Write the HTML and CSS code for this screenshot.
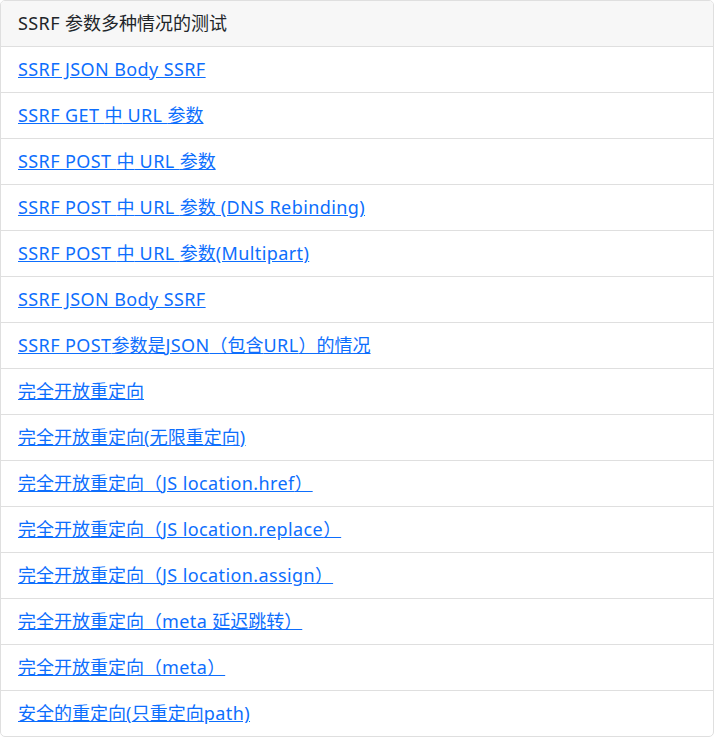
FILE: index.html
```html
<!DOCTYPE html>
<html lang="zh-CN">
<head>
<meta charset="utf-8">
<title>SSRF</title>
<link rel="stylesheet" href="styles.css">
</head>
<body>
<div class="card">
  <div class="card-header"><span class="en">SSRF </span>参数多种情况的测试</div>
  <ul class="list-group">
    <li class="list-item"><a href="#"><span class="en">SSRF JSON Body SSRF</span></a></li>
    <li class="list-item"><a href="#"><span class="en">SSRF GET </span>中<span class="en"> URL </span>参数</a></li>
    <li class="list-item"><a href="#"><span class="en">SSRF POST </span>中<span class="en"> URL </span>参数</a></li>
    <li class="list-item"><a href="#"><span class="en">SSRF POST </span>中<span class="en"> URL </span>参数<span class="en"> (DNS Rebinding)</span></a></li>
    <li class="list-item"><a href="#"><span class="en">SSRF POST </span>中<span class="en"> URL </span>参数<span class="en">(Multipart)</span></a></li>
    <li class="list-item"><a href="#"><span class="en">SSRF JSON Body SSRF</span></a></li>
    <li class="list-item"><a href="#"><span class="en">SSRF POST</span>参数是<span class="en">JSON</span>（包含<span class="en">URL</span>）的情况</a></li>
    <li class="list-item"><a href="#">完全开放重定向</a></li>
    <li class="list-item"><a href="#">完全开放重定向<span class="en">(</span>无限重定向<span class="en">)</span></a></li>
    <li class="list-item"><a href="#">完全开放重定向（<span class="en">JS location.href</span>）</a> </li>
    <li class="list-item"><a href="#">完全开放重定向（<span class="en">JS location.replace</span>）</a> </li>
    <li class="list-item"><a href="#">完全开放重定向（<span class="en">JS location.assign</span>）</a> </li>
    <li class="list-item"><a href="#">完全开放重定向（<span class="en">meta </span>延迟跳转）</a> </li>
    <li class="list-item"><a href="#">完全开放重定向（<span class="en">meta</span>）</a> </li>
    <li class="list-item"><a href="#">安全的重定向<span class="en">(</span>只重定向<span class="en">path)</span></a></li>
  </ul>
</div>
</body>
</html>
```

FILE: styles.css
```css
html, body {
  margin: 0;
  padding: 0;
  background: #fff;
}
body {
  font-family: "Noto Sans", "Noto Sans CJK SC", sans-serif;
  font-size: 18px;
  line-height: 27px;
  color: #212529;
}
.en {
  letter-spacing: 0.4px;
}
.card {
  width: 712px;
  border: 1px solid #dfdfdf;
  border-radius: 5px;
  overflow: hidden;
}
.card-header {
  background: #f7f7f7;
  padding: 9px 17px;
  border-bottom: 1px solid #dfdfdf;
}
.list-group {
  list-style: none;
  margin: 0;
  padding: 0;
}
.list-item {
  padding: 9px 17px;
  border-bottom: 1px solid #dfdfdf;
}
.list-item:last-child {
  border-bottom: 0;
}
.list-item a {
  color: #0d6efd;
  text-decoration: underline;
}
```
